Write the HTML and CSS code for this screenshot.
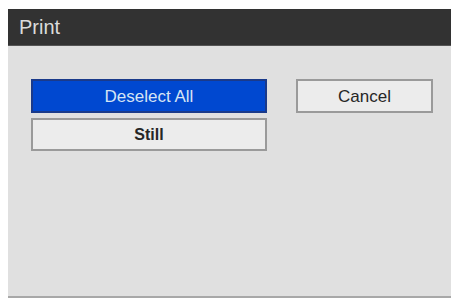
FILE: index.html
```html
<!DOCTYPE html>
<html>
<head>
<meta charset="utf-8">
<link rel="stylesheet" href="styles.css">
</head>
<body>
<div class="dialog">
  <div class="titlebar">Print</div>
  <div class="content">
    <div class="col-left">
      <div class="btn btn-selected">Deselect All</div>
      <div class="btn btn-bold">Still</div>
    </div>
    <div class="col-right">
      <div class="btn">Cancel</div>
    </div>
  </div>
</div>
</body>
</html>
```

FILE: styles.css
```css
html, body {
  background: #ffffff;
}
body {
  margin: 9px 0 0 8px;
  font-family: "Liberation Sans", Arial, sans-serif;
}
.dialog {
  height: 289px;
  box-sizing: border-box;
  background: #e0e0e0;
  border-bottom: 2px solid #a8a8a8;
  display: flex;
  flex-direction: column;
}
.titlebar {
  height: 37px;
  box-sizing: border-box;
  background: #323232;
  color: #dcdcdc;
  font-size: 20px;
  line-height: 37px;
  padding-left: 11px;
  border-bottom: 1px solid #555;
}
.content {
  display: flex;
  padding: 33px 0 0 23px;
  gap: 29px;
}
.col-left {
  width: 236px;
  display: flex;
  flex-direction: column;
  gap: 5px;
}
.col-right {
  width: 137px;
}
.btn {
  height: 34px;
  box-sizing: border-box;
  border: 2px solid #9a9a9a;
  background: #ececec;
  color: #262626;
  font-size: 17px;
  padding-top: 1px;
  display: flex;
  align-items: center;
  justify-content: center;
}
.btn-selected {
  background: #0048d0;
  border-color: #1a3a8a;
  color: #d6e4f4;
}
.btn-bold {
  height: 33px;
  font-weight: bold;
  font-size: 16px;
}
```
